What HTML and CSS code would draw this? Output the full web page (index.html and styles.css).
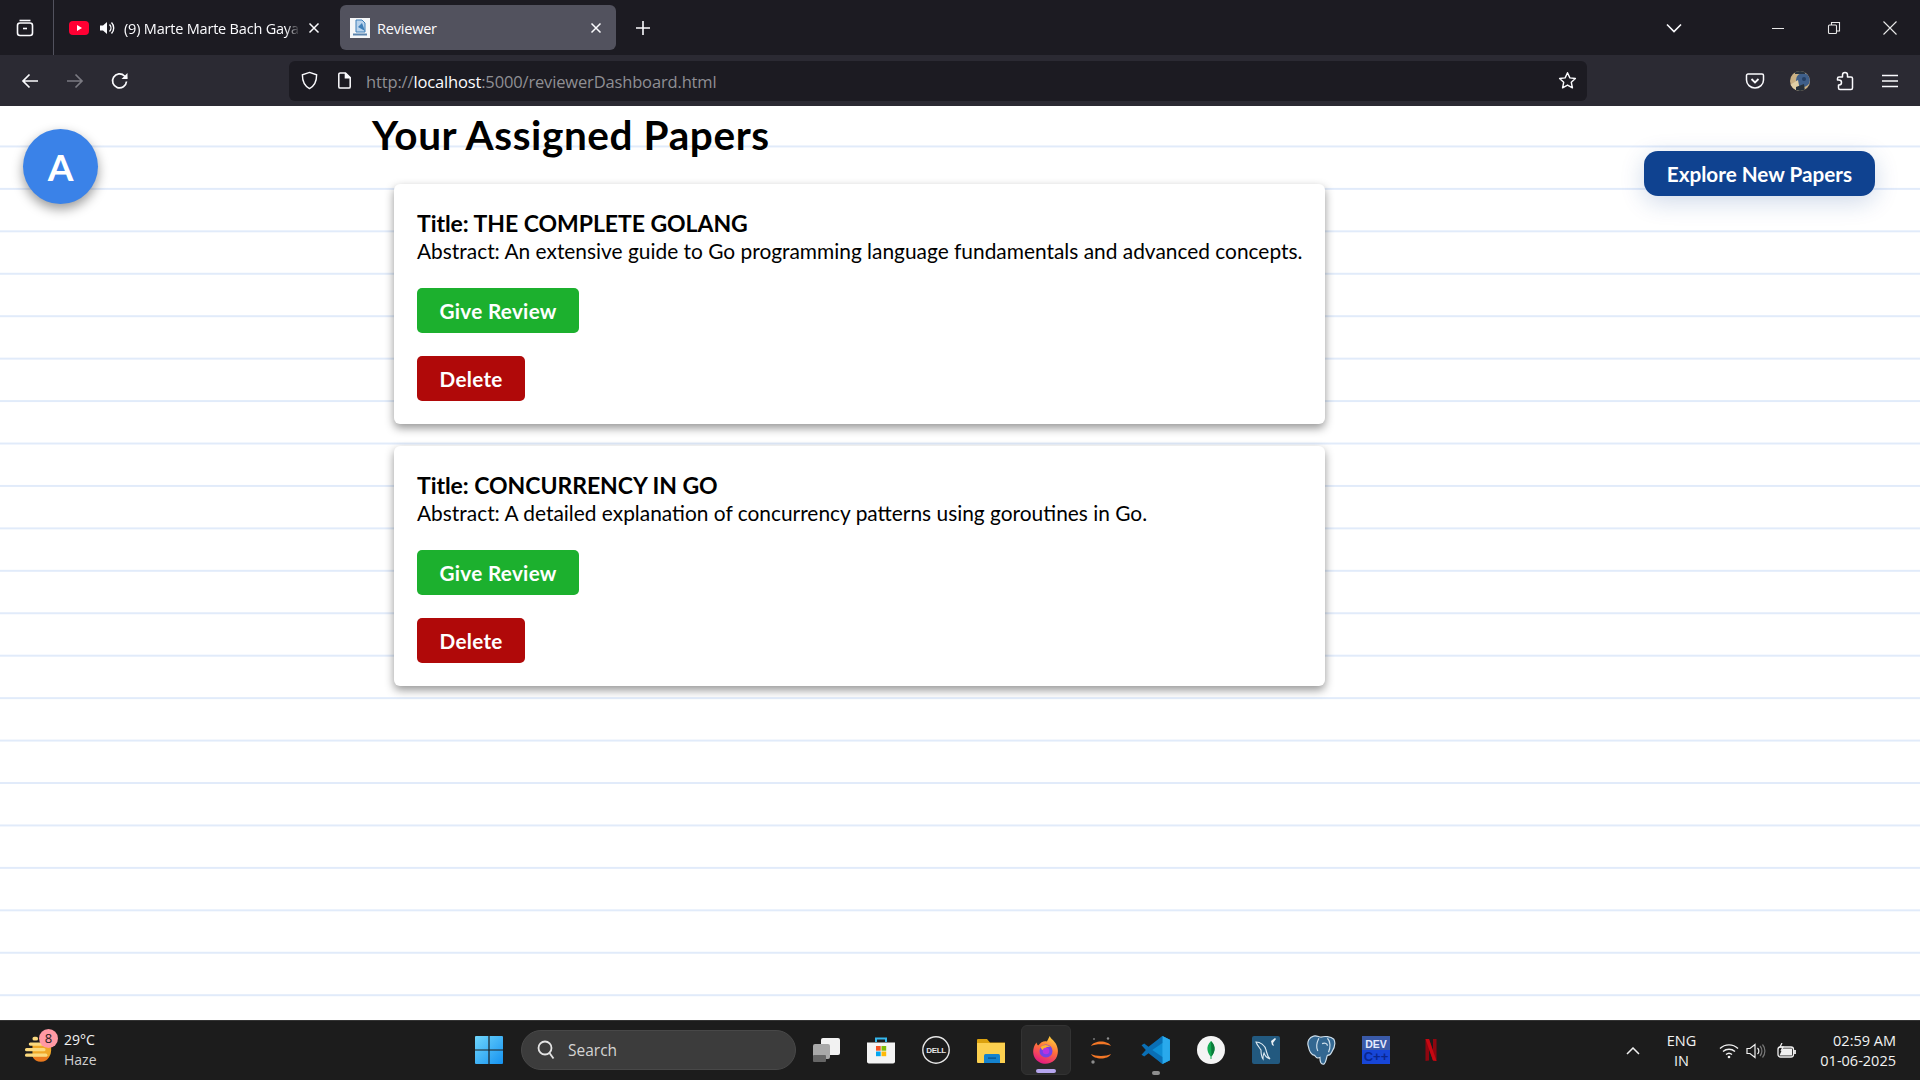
FILE: index.html
```html
<!DOCTYPE html>
<html lang="en">
<head>
<meta charset="utf-8">
<title>Reviewer</title>
<link rel="stylesheet" href="styles.css">
</head>
<body>
<header class="tabbar">
  <div class="tab-manager">
    <svg class="ico20" viewBox="0 0 20 20" fill="none" stroke="#fbfbfe" stroke-width="1.6"><path d="M4.5 2.5h11"/><rect x="2.5" y="5" width="15" height="12.5" rx="2.5"/><path d="M8 10.5h4"/></svg>
  </div>
  <div class="tab tab-bg">
    <svg class="fav yt" viewBox="0 0 20 14"><rect width="20" height="14" rx="4" fill="#ff0033"/><path d="M8 4l5 3-5 3z" fill="#fff"/></svg>
    <svg class="speaker" viewBox="0 0 16 16" fill="#fbfbfe"><path d="M1 5.5h3L8 2v12l-4-3.5H1z"/><path d="M10.5 4.5a5 5 0 0 1 0 7M12.5 2.5a8 8 0 0 1 0 11" fill="none" stroke="#fbfbfe" stroke-width="1.4"/></svg>
    <span class="tab-title fade">(9) Marte Marte Bach Gaya</span>
    <svg class="tab-close" viewBox="0 0 12 12" stroke="#fbfbfe" stroke-width="1.5"><path d="M1.5 1.5l9 9M10.5 1.5l-9 9"/></svg>
  </div>
  <div class="tab tab-active">
    <svg class="fav" viewBox="0 0 20 20"><rect width="20" height="20" fill="#f4f6f8"/><path d="M6 2h6l3 3v9H6z" fill="#b9d3ec" stroke="#3f7fb8"/><path d="M8 9l4-4 3 8z" fill="#3f7fb8"/><rect x="3" y="15.5" width="14" height="2" fill="#5a83ad"/></svg>
    <span class="tab-title">Reviewer</span>
    <svg class="tab-close" viewBox="0 0 12 12" stroke="#fbfbfe" stroke-width="1.5"><path d="M1.5 1.5l9 9M10.5 1.5l-9 9"/></svg>
  </div>
  <svg class="new-tab" viewBox="0 0 16 16" stroke="#fbfbfe" stroke-width="1.6"><path d="M8 1v14M1 8h14"/></svg>
  <svg class="tabs-chevron" viewBox="0 0 16 10" fill="none" stroke="#fbfbfe" stroke-width="1.6"><path d="M1 1.5l7 7 7-7"/></svg>
  <svg class="win-btn" viewBox="0 0 14 14" stroke="#e8e8e8" stroke-width="1"><path d="M1 7.5h12"/></svg>
  <svg class="win-btn" viewBox="0 0 14 14" fill="none" stroke="#e8e8e8" stroke-width="1.1"><rect x="1.5" y="4" width="8" height="8.5" rx="1"/><path d="M4.5 4V1.5h8v8.5H9.5"/></svg>
  <svg class="win-btn" viewBox="0 0 14 14" stroke="#e8e8e8" stroke-width="1.1"><path d="M.5.5l13 13M13.5.5l-13 13"/></svg>
</header>

<nav class="toolbar">
  <svg class="tool back" viewBox="0 0 20 20" fill="none" stroke="#fbfbfe" stroke-width="1.7"><path d="M18 10H3M9.5 3.5L3 10l6.500 6.500"/></svg>
  <svg class="tool forward" viewBox="0 0 20 20" fill="none" stroke="#7b7a82" stroke-width="1.700"><path d="M2 10h15M10.500 3.500L17 10l-6.500 6.500"/></svg>
  <svg class="tool reload" viewBox="0 0 20 20" fill="none" stroke="#fbfbfe" stroke-width="1.700"><path d="M16.500 10.500a7 7 0 1 1-2-5.500L17 7.500"/><path d="M17.500 2v6h-6" fill="#fbfbfe" stroke="none"/></svg>
  <div class="urlbar">
    <svg class="url-ico" viewBox="0 0 20 20" fill="none" stroke="#fbfbfe" stroke-width="1.500"><path d="M10 1.500l7.500 2.500c0 7-1.500 11.500-7.500 14.500C4 15.500 2.500 11 2.500 4z"/></svg>
    <svg class="url-ico page-ico" viewBox="0 0 20 20" fill="none" stroke="#fbfbfe" stroke-width="1.600"><path d="M4 3.500A1.500 1.500 0 0 1 5.500 2H11l5 5v9.500a1.500 1.500 0 0 1-1.500 1.500h-9A1.500 1.500 0 0 1 4 16.500z"/><path d="M11 2v5h5" fill="#fbfbfe"/></svg>
    <span class="url"><span class="url-dim">http://</span><span class="url-host">localhost</span><span class="url-dim">:5000/reviewerDashboard.html</span></span>
    <svg class="url-ico star" viewBox="0 0 20 20" fill="none" stroke="#fbfbfe" stroke-width="1.500"><path d="M10 1.800l2.500 5.400 5.800.7-4.300 4 1.200 5.800-5.200-2.900-5.200 2.900 1.200-5.800-4.300-4 5.800-.7z" stroke-linejoin="round"/></svg>
  </div>
  <div class="tool-right">
    <svg class="tool" viewBox="0 0 20 20" fill="none" stroke="#fbfbfe" stroke-width="1.500"><path d="M3 3h14a1.500 1.500 0 0 1 1.500 1.500V9a8.500 8 0 0 1-17 0V4.500A1.500 1.500 0 0 1 3 3z"/><path d="M6.500 8l3.500 3.500L13.500 8" stroke-width="1.800"/></svg>
    <svg class="tool" viewBox="0 0 20 20"><defs><clipPath id="pf"><circle cx="10" cy="10" r="10"/></clipPath></defs><g clip-path="url(#pf)"><rect width="20" height="20" fill="#c9b084"/><circle cx="13" cy="9" r="7" fill="#3f5f8a"/><path d="M0 14l8-5 2 11H0z" fill="#e0cfa6"/><path d="M5 0h10v3H5z" fill="#27333f"/><path d="M6 16l8-3 1 7H6z" fill="#26303a"/><circle cx="14" cy="8" r="2" fill="#253f63"/></g></svg>
    <svg class="tool" viewBox="0 0 20 20" fill="none" stroke="#fbfbfe" stroke-width="1.500"><path d="M7 18.500h9a1.500 1.500 0 0 0 1.500-1.500V7.500a1.500 1.500 0 0 0-1.500-1.500h-3.500V4a2.500 2.500 0 0 0-5 0v2H4a1.500 1.500 0 0 0-1.500 1.500L2.500 9h1.500a2.500 2.500 0 0 1 0 5h-.5v3a1.500 1.500 0 0 0 1.500 1.500z" stroke-linejoin="round"/></svg>
    <svg class="tool" viewBox="0 0 20 20" stroke="#fbfbfe" stroke-width="1.600"><path d="M2 4.500h16M2 10h16M2 15.500h16"/></svg>
  </div>
</nav>

<div class="page">
  <aside class="side-left">
    <div class="avatar">A</div>
  </aside>
  <main class="papers">
    <h1 class="heading">Your Assigned Papers</h1>
    <article class="card">
      <h3 class="card-title">Title: THE COMPLETE GOLANG</h3>
      <p class="card-abstract">Abstract: An extensive guide to Go programming language fundamentals and advanced concepts.</p>
      <button class="btn btn-review">Give Review</button>
      <button class="btn btn-delete">Delete</button>
    </article>
    <article class="card">
      <h3 class="card-title">Title: CONCURRENCY IN GO</h3>
      <p class="card-abstract">Abstract: A detailed explanation of concurrency patterns using goroutines in Go.</p>
      <button class="btn btn-review">Give Review</button>
      <button class="btn btn-delete">Delete</button>
    </article>
  </main>
  <aside class="side-right">
    <button class="explore">Explore New Papers</button>
  </aside>
</div>

<footer class="taskbar">
  <div class="weather">
    <div class="weather-ico">
      <svg class="sun" viewBox="0 0 30 34"><path d="M8 12h20v8a11 11 0 0 1-20 6z" fill="#f0a828"/><path d="M8 26h18a10 10 0 0 1-18 0z" fill="#ea7a1e"/><g fill="#fbd97e"><rect x="8" y="5" width="6" height="4" rx="2"/><rect x="4" y="11" width="22" height="3.500" rx="1.700"/><rect x="0" y="17" width="22" height="3.500" rx="1.700"/><rect x="0" y="23" width="24" height="3.500" rx="1.700"/></g></svg>
      <span class="badge">8</span>
    </div>
    <div class="weather-text"><span>29°C</span><span class="haze">Haze</span></div>
  </div>
  <svg class="start" viewBox="0 0 28 28"><defs><linearGradient id="w" x1="0" y1="0" x2="1" y2="1"><stop offset="0" stop-color="#6fd5fb"/><stop offset="1" stop-color="#1592f0"/></linearGradient></defs><path d="M0 1a1 1 0 0 1 1-1h12.400v13.400H0zM14.600 0H27a1 1 0 0 1 1 1v12.400H14.600zM0 14.600h13.400V28H1a1 1 0 0 1-1-1zM14.600 14.600H28V27a1 1 0 0 1-1 1H14.600z" fill="url(#w)"/></svg>
  <div class="search">
    <svg class="search-ico" viewBox="0 0 18 20" fill="none" stroke="#e4e4e4" stroke-width="1.800"><circle cx="8" cy="8" r="6.500"/><path d="M12.500 13l4 5.500"/></svg>
    <span>Search</span>
  </div>
  <div class="apps">
    <div class="app"><svg class="app-ico" viewBox="0 0 28 28"><rect x="9" y="2" width="19" height="17" rx="2" fill="#f2f2f2"/><rect x="1" y="8" width="17" height="15" rx="2" fill="#a8a8a8"/><rect x="1" y="19" width="13" height="7" rx="1" fill="#666"/></svg></div>
    <div class="app"><svg class="app-ico" viewBox="0 0 28 28"><path d="M9 6V2.500h10V6" fill="none" stroke="#35b8ee" stroke-width="2"/><path d="M0 6.500h28v19a2 2 0 0 1-2 2H3a3 2 0 0 1-3-2z" fill="#f4f4f4"/><rect x="9" y="10" width="4.700" height="4.700" fill="#f35325"/><rect x="14.500" y="10" width="4.700" height="4.700" fill="#81bc06"/><rect x="9" y="15.500" width="4.700" height="4.700" fill="#05a6f0"/><rect x="14.500" y="15.500" width="4.700" height="4.700" fill="#ffba08"/></svg></div>
    <div class="app"><svg class="app-ico" viewBox="0 0 28 28"><circle cx="14" cy="14" r="13.200" fill="none" stroke="#e6e6e6" stroke-width="1.400"/><text class="dell" x="14" y="17" text-anchor="middle">DELL</text></svg></div>
    <div class="app"><svg class="app-ico" viewBox="0 0 28 28"><path d="M0 4a1 1 0 0 1 1-1h9l3 3.500h17V12H0z" fill="#dca20e"/><path d="M0 7h30v19a1 1 0 0 1-1 1H1a1 1 0 0 1-1-1z" fill="#fcd04f"/><path d="M7 19.500a1.500 1.500 0 0 1 1.500-1.500h13a1.500 1.500 0 0 1 1.500 1.500V27H7z" fill="#1583cf"/><rect x="11" y="21.500" width="8" height="1.200" fill="#0a4f86"/></svg></div>
    <div class="app app-active">
      <svg class="app-ico" viewBox="0 0 30 30"><defs><linearGradient id="ff" x1=".7" y1="0" x2=".3" y2="1"><stop offset="0" stop-color="#ffd23d"/><stop offset=".45" stop-color="#ff7139"/><stop offset="1" stop-color="#e31587"/></linearGradient></defs><path d="M2 12c1-3 2-4 3-5 0 2 1 3 2 3 2-3 6-5 9-4 1-2 2-4 3-6 1 3 5 5 7 9 3 6 2 13-2 17-4 4-11 5-16 2C2 25 0 18 2 12z" fill="url(#ff)"/><circle cx="15" cy="16" r="7" fill="#7542e5"/><path d="M9 12c3-3 8-3 11 0-3-1-5 0-6 2l-3 1z" fill="#ffb32c"/><circle cx="15" cy="16" r="3.500" fill="#b833e1"/></svg>
      <span class="indicator indicator-open"></span>
    </div>
    <div class="app"><svg class="app-ico" viewBox="0 0 28 28"><path d="M4 10C7 4 21 4 24 10 20 7.500 8 7.500 4 10zM4 18C7 24 21 24 24 18 20 20.500 8 20.500 4 18z" fill="#f37726"/><circle cx="21" cy="2.500" r="1.200" fill="#8d8d8d"/><circle cx="7" cy="3" r="1" fill="#777"/><circle cx="6" cy="26" r="1.700" fill="#8d8d8d"/></svg></div>
    <div class="app">
      <svg class="app-ico vscode" viewBox="0 0 28 28"><path d="M20 1l7 3.500v19L20 27 6 14z" fill="#0e8fd6"/><path d="M20 1v26l7-3.500v-19z" fill="#29a9ec"/><path d="M20 7.500L10.500 14l9.500 6.500v6.500L7 17l-4 3-2.500-1.500L4.500 14 .5 9.500 3 8l4 3L20 1z" fill="#0a6fb5"/></svg>
      <span class="indicator"></span>
    </div>
    <div class="app"><svg class="app-ico" viewBox="0 0 28 28"><circle cx="14" cy="14" r="14" fill="#f4f4f4"/><path d="M14 5c3 3 4 6 3.500 9-.4 3-2 5-3 6.500V23h-1v-2.500c-1-1.500-2.600-3.500-3-6.500C10 11 11 8 14 5z" fill="#13aa52"/><path d="M14 5c3 3 4 6 3.500 9-.4 3-2 5-3 6.500z" fill="#0c7a3a"/></svg></div>
    <div class="app"><svg class="app-ico" viewBox="0 0 28 28"><rect width="28" height="28" rx="2" fill="#22597f"/><path d="M4 6c4 0 9 3 10 8 1 3 1 6 4 9-3-1-5-3-6-6-1 2-1 4-1 6-2-3-2-6-2-9-2-3-4-5-5-8z" fill="none" stroke="#dce9f1" stroke-width="1.100"/><path d="M19 5l4-3 1 1-3 4 1 3-2-1z" fill="#e8eef2"/></svg></div>
    <div class="app"><svg class="app-ico vscode" viewBox="0 0 28 28"><path d="M7 1c3-1 5 1 7 1 3-1 9-1 12 2 2 4 0 9-2 12-1 2-2 3-4 3-1 2-1 6-3 8-3 1-4-2-4-6-2 1-4 0-5-2-3 0-5-4-6-9-1-4 1-8 5-9z" fill="#336791" stroke="#cfdfeb" stroke-width="1.100"/><path d="M12 3c-2 4-3 8-1 12M20 3c3 3 3 9 1 13M15 8c3-1 5 0 5 2" fill="none" stroke="#cfdfeb" stroke-width="1.100"/></svg></div>
    <div class="app"><svg class="app-ico" viewBox="0 0 28 28"><rect width="28" height="28" fill="#1746d8"/><rect width="28" height="14" fill="#3a5aa8"/><text class="dev" x="14" y="11.500" text-anchor="middle">DEV</text><text class="cpp" x="14" y="25" text-anchor="middle">C++</text></svg></div>
    <div class="app"><svg class="netflix" viewBox="0 0 14 28"><path d="M0 0h4.500l5 15V0H14v28l-4.500-.7L4.500 13v14.500L0 28z" fill="#8e0610"/><path d="M0 0h4.500l9.500 28-4.500-.7z" fill="#c70812"/></svg></div>
  </div>
  <div class="tray">
    <svg class="tray-up" viewBox="0 0 14 8" fill="none" stroke="#f0f0f0" stroke-width="1.500"><path d="M1 7l6-6 6 6"/></svg>
    <div class="lang"><span>ENG</span><span>IN</span></div>
    <svg class="tray-ico" viewBox="0 0 20 16" fill="none" stroke="#f0f0f0" stroke-width="1.400"><path d="M1 5.500a13 13 0 0 1 18 0M4 8.500a9 9 0 0 1 12 0M7 11.500a4.500 4.500 0 0 1 6 0"/><circle cx="10" cy="14" r="1.300" fill="#f0f0f0" stroke="none"/></svg>
    <svg class="tray-ico" viewBox="0 0 20 16" fill="none" stroke="#f0f0f0" stroke-width="1.200"><path d="M1 5.500h3L9 1.500v13l-5-4H1z"/><path d="M11.500 5a4 4 0 0 1 0 6"/><path d="M14 3a7.500 7.500 0 0 1 0 10M16.500 1.500a10 10 0 0 1 0 13" stroke="#777"/></svg>
    <svg class="tray-ico battery" viewBox="0 0 20 16" fill="none" stroke="#f0f0f0" stroke-width="1.300"><rect x="1" y="4" width="15.500" height="10" rx="2.500"/><path d="M18 7v4" stroke-width="1.800"/><path d="M2.500 12.500l3-7H15v7z" fill="#f0f0f0" stroke="none"/><path d="M5 0L3 4h3L4 8" stroke-width="1.200"/></svg>
    <div class="clock"><span>02:59 AM</span><span>01-06-2025</span></div>
  </div>
</footer>
</body>
</html>
```
FILE: styles.css
```css
* { box-sizing: border-box; }
html, body { margin: 0; height: 100%; }
body {
  width: 1920px; height: 1080px; overflow: hidden;
  display: flex; flex-direction: column;
  font-family: "Open Sans", "Noto Sans", sans-serif;
  background: #fff;
}
svg { display: block; flex: none; }

/* Browser tab strip */
.tabbar {
  height: 55px; flex: none; background: #1c1b22; color: #fbfbfe;
  display: flex; align-items: center;
}
.tab-manager {
  width: 54px; height: 55px; border-right: 1px solid #52525e;
  display: flex; align-items: center; justify-content: center; padding-right: 4px;
}
.ico20 { width: 20px; height: 20px; }
.tab { height: 45px; display: flex; align-items: center; border-radius: 6px; position: relative; }
.tab-bg { width: 286px; padding-left: 15px; }
.tab-active { width: 276px; background: #52525e; padding-left: 10px; }
.fav { width: 20px; height: 20px; margin-right: 7px; }
.fav.yt { height: 14px; margin-right: 10px; }
.speaker { width: 16px; height: 16px; margin-right: 9px; }
.tab-title { font-size: 14.5px; letter-spacing: -.2px; white-space: nowrap; color: #fbfbfe; padding-top: 1px; }
.fade { width: 176px; overflow: hidden; -webkit-mask-image: linear-gradient(to right, #000 92%, transparent); mask-image: linear-gradient(to right, #000 92%, transparent); }
.tab-close { width: 12px; height: 12px; margin-left: auto; }
.tab-bg .tab-close { margin-right: 20px; }
.tab-active .tab-close { margin-right: 14px; }
.new-tab { width: 16px; height: 16px; margin-left: 19px; }
.tabs-chevron { width: 16px; height: 10px; margin-left: 1015px; }
.win-btn { width: 14px; height: 14px; }
.tabs-chevron + .win-btn { margin-left: 89px; }
.win-btn + .win-btn { margin-left: 42px; }

/* Browser toolbar */
.toolbar {
  height: 51px; flex: none; background: #2b2a33;
  display: flex; align-items: center; padding-left: 20px;
}
.tool { width: 20px; height: 20px; }
.forward { margin-left: 25px; }
.reload { margin-left: 25px; }
.urlbar {
  margin-left: 159px; width: 1298px; height: 40px; background: #1c1b22; border-radius: 6px;
  display: flex; align-items: center; padding-left: 11px; padding-right: 10px;
}
.url-ico { width: 19px; height: 19px; }
.page-ico { margin-left: 16px; }
.url { margin-left: 12px; padding-top: 1px; font-size: 16.5px; letter-spacing: -.15px; }
.url-dim { color: #8f8f94; }
.url-host { color: #fbfbfe; }
.star { margin-left: auto; }
.tool-right { display: flex; gap: 25px; margin-left: 158px; }

/* Page */
.page {
  flex: 1; min-height: 0; display: flex;
  background-color: #fff;
  background-image: linear-gradient(to bottom, transparent 40.2px, #e1ebfa 40.2px, #e1ebfa 42.45px);
  background-size: 100% 42.45px;
  background-position: 0 -1px;
  font-family: Lato, "Liberation Sans", sans-serif;
  color: #000;
}
.side-left { width: 372px; flex: none; padding: 23px 0 0 23px; }
.avatar {
  width: 75px; height: 75px; border-radius: 50%; background: #3a82e8; color: #fff;
  font-weight: 700; font-size: 37px;
  display: flex; align-items: center; justify-content: center;
  box-shadow: 0 5px 12px rgba(0,0,0,.4);
}
.papers { width: 953px; flex: none; }
.heading { margin: 0 0 24px; height: 54px; font-size: 40.5px; line-height: 58px; font-weight: 700; letter-spacing: .6px; white-space: nowrap; }
.card {
  margin: 0 0 22px 22px; height: 240px; padding: 23px; background: #fff; border-radius: 6px;
  box-shadow: 0 4px 10px rgba(0,0,0,.42);
}
.card-title { margin: 0; padding-top: 1px; font-size: 23px; line-height: 30px; font-weight: 700; letter-spacing: -.05px; }
.card-abstract { margin: 0 0 24px; font-size: 20.9px; line-height: 26px; font-weight: 400; white-space: nowrap; }
.btn {
  display: block; height: 45px; padding: 0 22.5px; border: 0; border-radius: 5px; color: #fff;
  font: 700 20.7px Lato, "Liberation Sans", sans-serif; letter-spacing: .3px;
}
.btn + .btn { margin-top: 23px; }
.btn-review { background: #1cb02e; }
.btn-delete { background: #b00909; }
.side-right { flex: 1; padding: 45px 45px 0 0; display: flex; justify-content: flex-end; align-items: flex-start; }
.explore {
  height: 45px; padding: 0 23px; border: 0; border-radius: 14px; background: #0f4290; color: #fff;
  font: 700 20.7px Lato, "Liberation Sans", sans-serif;
  box-shadow: 0 6px 25px rgba(15,66,144,.2);
}

/* Windows taskbar */
.taskbar {
  height: 60px; flex: none; background: #1c1c1c; border-top: 1px solid #333;
  display: flex; align-items: center; color: #f2f2f2;
}
.weather { width: 475px; padding-left: 25px; display: flex; align-items: center; flex: none; }
.weather-ico { width: 39px; height: 44px; position: relative; display: flex; align-items: flex-end; padding-bottom: 9px; }
.sun { width: 28px; height: 32px; }
.badge {
  position: absolute; left: 14px; top: 0; width: 19px; height: 19px; border-radius: 50%;
  background: #ff99a4; color: #1c1c1c; font-size: 13px; line-height: 19px; text-align: center;
}
.weather-text { display: flex; flex-direction: column; font-size: 14px; line-height: 20px; margin-top: -2px; }
.haze { color: #cfcfcf; }
.start { width: 28px; height: 28px; margin-bottom: 1px; }
.search {
  margin-left: 18px; width: 275px; height: 40px; border-radius: 20px; background: #3c3c3c; border: 1px solid #484848;
  display: flex; align-items: center; padding-left: 15px; font-size: 15.5px; color: #d4d4d4; margin-bottom: 1px;
}
.search-ico { width: 18px; height: 20px; margin-right: 13px; }
.apps { display: flex; margin-left: 2.5px; height: 50px; margin-bottom: 1px; }
.app { width: 55px; height: 50px; display: flex; align-items: center; justify-content: center; position: relative; }
.app-active { background: #2a2a2a; border-radius: 6px; border: 1px solid #333; width: 50px; margin: 0 2.5px; }
.app-ico { width: 28px; height: 28px; }
.app-ico.vscode { width: 30px; height: 30px; }
.netflix { width: 12px; height: 22px; }
.indicator {
  position: absolute; left: 50%; bottom: 0; width: 8px; height: 4px; margin-left: -4px;
  border-radius: 2px; background: #8e8e8e;
}
.indicator-open { width: 20px; margin-left: -10px; bottom: 1px; background: #b6a6ee; }
.dell { font: 700 8px "Liberation Sans", sans-serif; fill: #e6e6e6; letter-spacing: -.3px; }
.dev { font: 700 10.5px "Liberation Sans", sans-serif; fill: #e6ecff; }
.cpp { font: 700 13px "Liberation Sans", sans-serif; fill: #0a2690; }
.tray { display: flex; align-items: center; margin-left: 16px; flex: 1; padding-right: 24px; }
.tray-up { width: 14px; height: 8px; margin-left: 151px; }
.lang { width: 50px; margin-left: 17px; display: flex; flex-direction: column; align-items: center; font-size: 14.5px; line-height: 20px; }
.tray-ico { width: 20px; height: 16px; margin-left: 7px; }
.lang + .tray-ico { margin-left: 12px; }
.tray-ico.battery { margin-left: 11px; }
.clock { margin-left: auto; display: flex; flex-direction: column; align-items: flex-end; font-size: 14.5px; line-height: 20px; white-space: nowrap; }
```
